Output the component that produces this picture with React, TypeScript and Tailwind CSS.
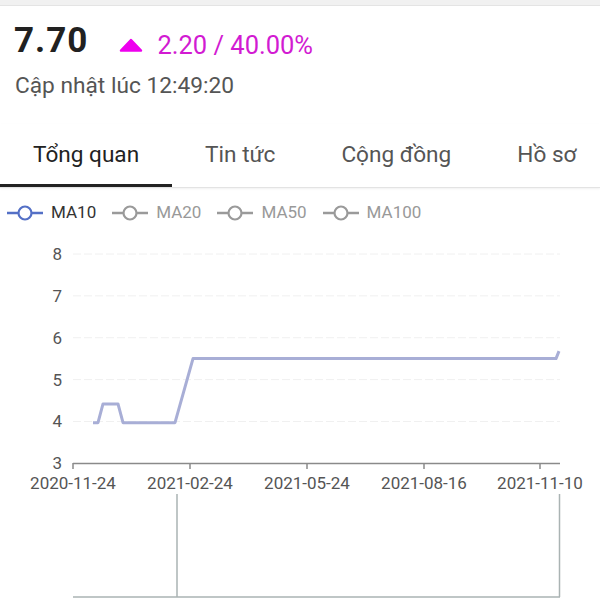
import React from 'react'

const tabs = ['Tổng quan', 'Tin tức', 'Cộng đồng', 'Hồ sơ']

const legend = [
  { name: 'MA10', active: true },
  { name: 'MA20', active: false },
  { name: 'MA50', active: false },
  { name: 'MA100', active: false },
]

// y pixel for a value on the price axis
const y = (v: number) => 464.3 - (v - 3) * 41.86

const line = [
  [93, 3.97],
  [98, 3.97],
  [103, 4.42],
  [118, 4.42],
  [123, 3.97],
  [175, 3.97],
  [193, 5.5],
  [556, 5.5],
  [559, 5.68],
]

const xTicks = [
  { x: 73, label: '2020-11-24' },
  { x: 190, label: '2021-02-24' },
  { x: 307, label: '2021-05-24' },
  { x: 424, label: '2021-08-16' },
  { x: 540, label: '2021-11-10' },
]

function LegendIcon({ color }: { color: string }) {
  return (
    <svg width="36" height="16" viewBox="0 0 36 16">
      <line x1="0" y1="8" x2="36" y2="8" stroke={color} strokeWidth="2.5" />
      <circle cx="18" cy="8" r="6.5" fill="white" stroke={color} strokeWidth="2.2" />
    </svg>
  )
}

export default function App() {
  const path = line.map(([px, v], i) => `${i === 0 ? 'M' : 'L'}${px} ${y(v).toFixed(1)}`).join(' ')

  return (
    <div className="w-[600px] h-[600px] overflow-hidden bg-white font-['Roboto',sans-serif]">
      {/* top strip */}
      <div className="h-[6px] bg-[#f1f1f1] border-b border-[#e4e4e4]" />

      {/* Header */}
      <div className="h-[118px] pl-[14px] pt-[14px]">
        <div className="flex items-center h-[40px]">
          <span className="text-[35px] leading-[40px] font-bold text-[#212121] tracking-[1px] mt-[2px]">7.70</span>
          <svg className="ml-[31px] mt-[10px]" width="24" height="14" viewBox="0 0 24 14">
            <polygon points="2,12.5 22,12.5 12,2" fill="#ee00ee" stroke="#ee00ee" strokeWidth="2.5" strokeLinejoin="round" />
          </svg>
          <span className="ml-[14px] mt-[10px] text-[25.5px] leading-[30px] text-[#d21bd2]">2.20 / 40.00%</span>
        </div>
        <div className="mt-[12px] pl-[1px] text-[22.7px] leading-[28px] text-[#555]">Cập nhật lúc 12:49:20</div>
      </div>

      {/* Tabs */}
      <div className="flex h-[64px] border-b border-[#e3e3e3] shadow-[0_1px_2px_rgba(0,0,0,0.06)] overflow-hidden">
        {tabs.map((t, i) => (
          <div
            key={t}
            className={
              i === 0
                ? 'shrink-0 h-full px-[33px] flex items-center pt-[2px] border-b-[3px] border-[#222] text-[22.6px] text-[#222]'
                : 'shrink-0 h-full px-[33px] flex items-center pt-[2px] border-b-[3px] border-transparent text-[22.6px] text-[#555]'
            }
          >
            {t}
          </div>
        ))}
      </div>

      {/* Legend */}
      <div className="flex items-center h-[49px] pl-[7px]">
        {legend.map((l) => (
          <div key={l.name} className="flex items-center mr-[16px]">
            <LegendIcon color={l.active ? '#5470c6' : '#9a9a9a'} />
            <span className={l.active ? 'ml-[8px] text-[17px] text-[#333]' : 'ml-[8px] text-[17px] text-[#999]'}>
              {l.name}
            </span>
          </div>
        ))}
      </div>

      {/* Chart */}
      <svg width="600" height="362" viewBox="0 238 600 362" className="block">
        {[4, 5, 6, 7, 8].map((v) => (
          <line key={v} x1="73" x2="560" y1={y(v)} y2={y(v)} stroke="#f0f0f0" strokeWidth="1" strokeDasharray="8 3" />
        ))}
        {[3, 4, 5, 6, 7, 8].map((v) => (
          <text
            key={v}
            x="62"
            y={y(v) + 6}
            textAnchor="end"
            fontFamily="Roboto, sans-serif"
            fontSize="17"
            fill="#555"
          >
            {v}
          </text>
        ))}
        <line x1="73" x2="560" y1="464.5" y2="464.5" stroke="#8a8a8a" strokeWidth="1.5" />
        {xTicks.map((t) => (
          <g key={t.label}>
            <line x1={t.x} x2={t.x} y1="464" y2="470" stroke="#8a8a8a" strokeWidth="1.5" />
            <text x={t.x} y="489.5" textAnchor="middle" fontFamily="Roboto, sans-serif" fontSize="17" fill="#555">
              {t.label}
            </text>
          </g>
        ))}
        <path d={path} fill="none" stroke="#a8aed6" strokeWidth="3" strokeLinejoin="round" />

        {/* lower panel */}
        <line x1="177" x2="177" y1="495" y2="598" stroke="#aab3b3" strokeWidth="1.5" />
        <line x1="559.5" x2="559.5" y1="495" y2="598" stroke="#aab3b3" strokeWidth="1.5" />
        <line x1="73" x2="560" y1="598" y2="598" stroke="#aab3b3" strokeWidth="1.5" />
      </svg>
    </div>
  )
}
